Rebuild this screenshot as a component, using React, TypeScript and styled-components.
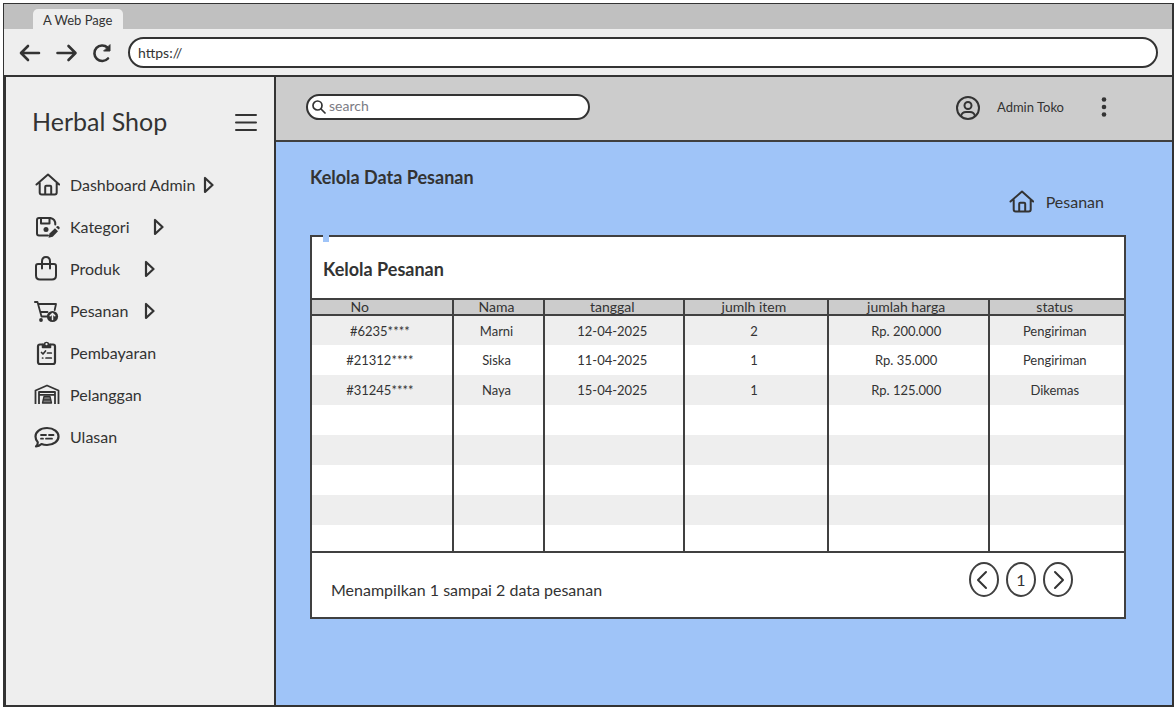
import React from "react";
import styled, { createGlobalStyle } from "styled-components";

const INK = "#333333";
const LINE = "#404040";
const PAPER = "#eeeeee";
const GREY = "#cccccc";
const SKY = "#9fc4f8";

const GlobalStyle = createGlobalStyle`
  * { box-sizing: border-box; }
  body { margin: 0; background: #fff; color: ${INK}; font-family: Lato, "Liberation Sans", sans-serif; }
  button, input { font: inherit; color: inherit; }
  h1, h2, p, ul { margin: 0; padding: 0; }
`;

const Page = styled.div`
  min-height: 100vh;
  padding: 3px 2px 2px 3px;
  display: flex;
`;

const Frame = styled.div`
  flex: 1;
  display: flex;
  flex-direction: column;
  border: 2px solid ${INK};
  border-top-width: 1px;
  border-left-width: 1px;
`;

const TabStrip = styled.div`
  display: flex;
  align-items: flex-end;
  height: 25px;
  padding-left: 29px;
  background: #c0c0c0;
`;

const Tab = styled.div`
  padding: 2px 11px 0 10px;
  line-height: 18px;
  font-size: 13px;
  background: ${PAPER};
  border-radius: 5px 5px 0 0;
`;

const AddressBar = styled.div`
  display: flex;
  align-items: center;
  gap: 13px;
  height: 48px;
  padding: 0 14px 0 15px;
  background: ${PAPER};
  border-bottom: 2px solid ${INK};
`;

const IconButton = styled.button`
  display: flex;
  padding: 0;
  border: 0;
  background: none;
  cursor: pointer;
`;

const BrowserButtons = styled.div`
  display: flex;
  gap: 12px;
`;

const UrlInput = styled.input`
  flex: 1;
  min-width: 0;
  height: 31px;
  padding: 0 8px;
  border: 2px solid ${INK};
  border-radius: 16px;
  background: #fff;
  font-size: 14px;
  outline: none;
`;

const Body = styled.div`
  flex: 1;
  display: flex;
`;

const Sidebar = styled.aside`
  flex: 0 0 272px;
  background: ${PAPER};
  border: solid ${INK};
  border-width: 0 2px;
`;

const Brand = styled.div`
  display: flex;
  align-items: center;
  justify-content: space-between;
  height: 87px;
  padding: 0 16px 0 26px;
`;

const BrandName = styled.h1`
  font-size: 25px;
  line-height: 32px;
  font-weight: 400;
`;

const Menu = styled.ul`
  list-style: none;
  padding-left: 28px;
`;

const MenuLink = styled.a<{ $gap: number }>`
  display: flex;
  align-items: center;
  gap: ${(p) => p.$gap}px;
  height: 42px;
  font-size: 16px;
  line-height: 20px;
  color: inherit;
  text-decoration: none;
`;

const MenuLabel = styled.span`
  display: flex;
  align-items: center;
  gap: 10px;
`;

const Main = styled.main`
  flex: 1;
  min-width: 0;
  background: ${SKY};
`;

const TopBar = styled.header`
  display: flex;
  align-items: center;
  justify-content: space-between;
  height: 65px;
  padding: 0 57px 4px 30px;
  background: ${GREY};
  border-bottom: 2px solid ${LINE};
`;

const Search = styled.label`
  display: flex;
  align-items: center;
  gap: 3px;
  width: 284px;
  height: 26px;
  padding: 0 4px;
  border: 2px solid ${INK};
  border-radius: 13px;
  background: #fff;
`;

const SearchInput = styled.input`
  flex: 1;
  min-width: 0;
  padding: 0 0 2px;
  border: 0;
  background: none;
  outline: none;
  font-size: 14px;
  &::placeholder { color: #7c7c84; opacity: 1; }
`;

const Account = styled.div`
  display: flex;
  align-items: center;
  gap: 16px;
  font-size: 13px;
`;

const AccountMenu = styled(IconButton)`
  margin-left: 13px;
`;

const Content = styled.div`
  padding: 23px 46px 24px 34px;
`;

const PageTitle = styled.h2`
  font-size: 18px;
  line-height: 24px;
`;

const Crumb = styled.a`
  display: flex;
  align-items: center;
  justify-content: flex-end;
  gap: 12px;
  height: 24px;
  margin: 1px 22px 21px 0;
  font-size: 16px;
  line-height: 20px;
  color: inherit;
  text-decoration: none;
`;

const Card = styled.section`
  position: relative;
  background: #fff;
  border: 2px solid ${LINE};
`;

const Notch = styled.span`
  position: absolute;
  top: -2px;
  left: 11px;
  width: 6px;
  height: 7px;
  background: ${SKY};
`;

const CardTitle = styled.h2`
  padding: 4px 11px 0;
  font-size: 18px;
  line-height: 57px;
`;

const Table = styled.table`
  width: 100%;
  table-layout: fixed;
  border-spacing: 0;
  font-size: 13px;
  line-height: 16px;
  text-align: center;
  border-bottom: 2px solid ${LINE};
`;

const HeadCell = styled.th<{ $inset?: number }>`
  height: 18px;
  padding: 0 ${(p) => p.$inset || 0}px 0 0;
  font-size: 14px;
  font-weight: 400;
  line-height: 14px;
  background: ${GREY};
  border: solid ${LINE};
  border-width: 2px 0 2px 2px;
  &:first-child { border-left: 0; }
`;

const Row = styled.tr`
  &:nth-child(odd) { background: ${PAPER}; }
`;

const Cell = styled.td`
  height: 30px;
  padding: 0 4px 0 0;
  border-left: 2px solid ${LINE};
  &:first-child { border-left: 0; }
  tr:first-child > & { height: 29px; }
  tr:last-child > & { height: 26px; }
`;

const CardFooter = styled.div`
  display: flex;
  align-items: flex-start;
  justify-content: space-between;
  height: 64px;
  padding: 9px 51px 0 19px;
`;

const Summary = styled.p`
  padding-top: 18px;
  font-size: 16px;
  line-height: 20px;
`;

const Pager = styled.nav`
  display: flex;
  gap: 7px;
`;

const PageButton = styled.button`
  display: flex;
  align-items: center;
  justify-content: center;
  width: 30px;
  height: 35px;
  padding: 0;
  border: 2px solid ${LINE};
  border-radius: 50%;
  background: #fff;
  font-size: 16px;
  line-height: 20px;
  cursor: pointer;
`;

type IconProps = { children: React.ReactNode; size?: number; stroke?: number };

const Icon = ({ children, size = 26, stroke = 2 }: IconProps) => (
  <svg width={size} height={size} viewBox={`0 0 ${size} ${size}`} fill="none" stroke={INK}
    strokeWidth={stroke} strokeLinecap="round" strokeLinejoin="round" aria-hidden="true">
    {children}
  </svg>
);

const HomeIcon = () => (
  <Icon>
    <path d="M2.5 12.5 14 2.500 25.200 12.500M5.700 11v9.500q0 2 2 2h13q2 0 2-2V11M11.200 22.300v-7.500q0-1 1-1h4q1 0 1 1v7.500" />
  </Icon>
);

const SaveEditIcon = () => (
  <Icon>
    <path d="M14 21.500H5q-2 0-2-2V6q0-2 2-2h11.500q5 1 4.800 6.500M7 4.500v5h8.500v-5" />
    <circle cx="12" cy="15.500" r="2.500" fill={INK} stroke="none" />
    <path d="m14.500 23.800 1-4.300 5.500-5.300 3 3-5.300 5.500Z" fill={INK} stroke="none" />
    <path d="m22 13.200 1-1q1-.6 2 .4t.6 1.900l-.9 1Z" fill={INK} stroke="none" />
  </Icon>
);

const BagIcon = () => (
  <Icon>
    <path d="M4 8h16q2 0 2 2v9.500q0 4-4 4H6q-4 0-4-4V10q0-2 2-2ZM8 12.500V5.500q0-4.500 4-4.500t4 4.500v7" />
  </Icon>
);

const CartIcon = () => (
  <Icon stroke={1.8}>
    <path d="M.9 4H3.500l4 14.500h5.500M4.500 6h17.500l-1.300 6M6.500 14h7" />
    <circle cx="7" cy="22" r="1.900" fill={INK} stroke="none" />
    <circle cx="18.500" cy="18.500" r="5.600" fill={INK} stroke="none" />
    <path d="M18.500 21.500v-6m-2.300 2.200 2.300-2.200 2.300 2.200" stroke={PAPER} strokeWidth="1.500" />
  </Icon>
);

const ClipboardIcon = () => (
  <Icon>
    <path d="M8 4.500H6q-2 0-2 2V22q0 2 2 2h13q2 0 2-2V6.500q0-2-2-2h-2" strokeWidth="2.200" />
    <path d="M8.500 7.500V4.200h1.700a2.400 2.400 0 0 1 4.600 0h1.700v3.300Z" fill={INK} strokeWidth="1.500" />
    <circle cx="12.500" cy="4.200" r="1.100" fill={PAPER} stroke="none" />
    <path d="m7.500 12.500 1.500 1.500 2.500-3M13.500 13h3.800M8.500 18h.3M12 18h5.300" strokeWidth="1.700" />
  </Icon>
);

const WarehouseIcon = () => (
  <Icon stroke={1.8}>
    <path d="M1.500 22V8.500L13 3.500l11.500 5V22M5 22V10h16v12M5 12.800h16" strokeLinecap="butt" />
    <path d="M10 14.500h6l1.500 6.500h-9Z" fill="#777" strokeWidth="1.300" />
    <path d="M9.500 17.800h7" strokeWidth="1.300" />
  </Icon>
);

const ChatIcon = () => (
  <Icon stroke={2.2}>
    <path d="M2 22.500q2-1.500 1.800-4.300Q1.500 16 1.500 12.500C1.500 8 6 4 13 4s11.500 4 11.500 8.500S20 21 13 21q-3 0-5.500-1-2.500 2.300-5.500 2.500Z" />
    <path d="M7 11h5M15 11h4.500M7 14.700h2M12 14.700h6" strokeWidth="1.800" />
  </Icon>
);

const CaretIcon = () => (
  <svg width="11" height="18" viewBox="0 0 11 18" fill="none" stroke={INK} strokeWidth="2.2" strokeLinejoin="round" aria-hidden="true">
    <path d="M2 2v14l7.500-7Z" />
  </svg>
);

const menu = [
  { label: "Dashboard Admin", icon: <HomeIcon />, arrow: true, gap: 8 },
  { label: "Kategori", icon: <SaveEditIcon />, arrow: true, gap: 24 },
  { label: "Produk", icon: <BagIcon />, arrow: true, gap: 24 },
  { label: "Pesanan", icon: <CartIcon />, arrow: true, gap: 16 },
  { label: "Pembayaran", icon: <ClipboardIcon />, arrow: false, gap: 16 },
  { label: "Pelanggan", icon: <WarehouseIcon />, arrow: false, gap: 16 },
  { label: "Ulasan", icon: <ChatIcon />, arrow: false, gap: 16 },
];

const columns = [
  { name: "No", width: "17.2%" },
  { name: "Nama", width: "11.3%" },
  { name: "tanggal", width: "17.2%" },
  { name: "jumlh item", width: "17.7%" },
  { name: "jumlah harga", width: "19.8%" },
  { name: "status", width: "16.8%" },
];

const orders = [
  ["#6235****", "Marni", "12-04-2025", "2", "Rp. 200.000", "Pengiriman"],
  ["#21312****", "Siska", "11-04-2025", "1", "Rp. 35.000", "Pengiriman"],
  ["#31245****", "Naya", "15-04-2025", "1", "Rp. 125.000", "Dikemas"],
];

const blankRows = Array.from({ length: 5 }, () => columns.map(() => ""));

export default function App() {
  return (
    <Page>
      <GlobalStyle />
      <Frame>
        <TabStrip><Tab>A Web Page</Tab></TabStrip>
        <AddressBar>
          <BrowserButtons>
            <IconButton aria-label="Back"><Icon size={24} stroke={2.6}><path d="M20 13H2.500M9 6l-7 7 7 7" /></Icon></IconButton>
            <IconButton aria-label="Forward"><Icon size={24} stroke={2.6}><path d="M2.500 13H20M13.500 6l7 7-7 7" /></Icon></IconButton>
            <IconButton aria-label="Reload">
              <Icon size={24} stroke={2.6}>
                <path d="M17 18.500a7.800 7.800 0 1 1-.5-11" />
                <path d="M19 5v6h-6Z" fill={INK} strokeWidth="1" />
              </Icon>
            </IconButton>
          </BrowserButtons>
          <UrlInput aria-label="Address" defaultValue="https://" />
        </AddressBar>
        <Body>
          <Sidebar>
            <Brand>
              <BrandName>Herbal Shop</BrandName>
              <IconButton aria-label="Toggle menu">
                <Icon size={24}><path d="M2 6h20M2 13.500h20M2 21h20" /></Icon>
              </IconButton>
            </Brand>
            <Menu>
              {menu.map((m) => (
                <li key={m.label}>
                  <MenuLink href="#" $gap={m.gap}>
                    <MenuLabel>{m.icon}{m.label}</MenuLabel>
                    {m.arrow && <CaretIcon />}
                  </MenuLink>
                </li>
              ))}
            </Menu>
          </Sidebar>
          <Main>
            <TopBar>
              <Search>
                <Icon size={14} stroke={1.7}><circle cx="5.5" cy="5.5" r="4.500" /><path d="m9 9 4 4" /></Icon>
                <SearchInput type="search" placeholder="search" aria-label="search" />
              </Search>
              <Account>
                <Icon size={26}>
                  <circle cx="13" cy="14" r="11" />
                  <circle cx="13" cy="11.500" r="3.500" />
                  <path d="M6 22q1-4 5-4h4q4 0 5 4" />
                </Icon>
                Admin Toko
                <AccountMenu aria-label="More">
                  <Icon size={22}>
                    <g fill={INK} stroke="none"><circle cx="11" cy="3.500" r="2.300" /><circle cx="11" cy="11" r="2.300" /><circle cx="11" cy="18.500" r="2.300" /></g>
                  </Icon>
                </AccountMenu>
              </Account>
            </TopBar>
            <Content>
              <PageTitle>Kelola Data Pesanan</PageTitle>
              <Crumb href="#"><HomeIcon />Pesanan</Crumb>
              <Card>
                <Notch />
                <CardTitle>Kelola Pesanan</CardTitle>
                <Table>
                  <colgroup>{columns.map((c) => <col key={c.name} style={{ width: c.width }} />)}</colgroup>
                  <thead>
                    <tr>{columns.map((c, i) => <HeadCell key={c.name} scope="col" $inset={i === 0 ? 44 : 4}>{c.name}</HeadCell>)}</tr>
                  </thead>
                  <tbody>
                    {[...orders, ...blankRows].map((r, i) => (
                      <Row key={i}>{r.map((v, j) => <Cell key={j}>{v}</Cell>)}</Row>
                    ))}
                  </tbody>
                </Table>
                <CardFooter>
                  <Summary>Menampilkan 1 sampai 2 data pesanan</Summary>
                  <Pager aria-label="Pagination">
                    <PageButton aria-label="Previous page"><Icon size={20}><path d="M12 2 4 10l8 8" /></Icon></PageButton>
                    <PageButton>1</PageButton>
                    <PageButton aria-label="Next page"><Icon size={20}><path d="m7 2 8 8-8 8" /></Icon></PageButton>
                  </Pager>
                </CardFooter>
              </Card>
            </Content>
          </Main>
        </Body>
      </Frame>
    </Page>
  );
}
